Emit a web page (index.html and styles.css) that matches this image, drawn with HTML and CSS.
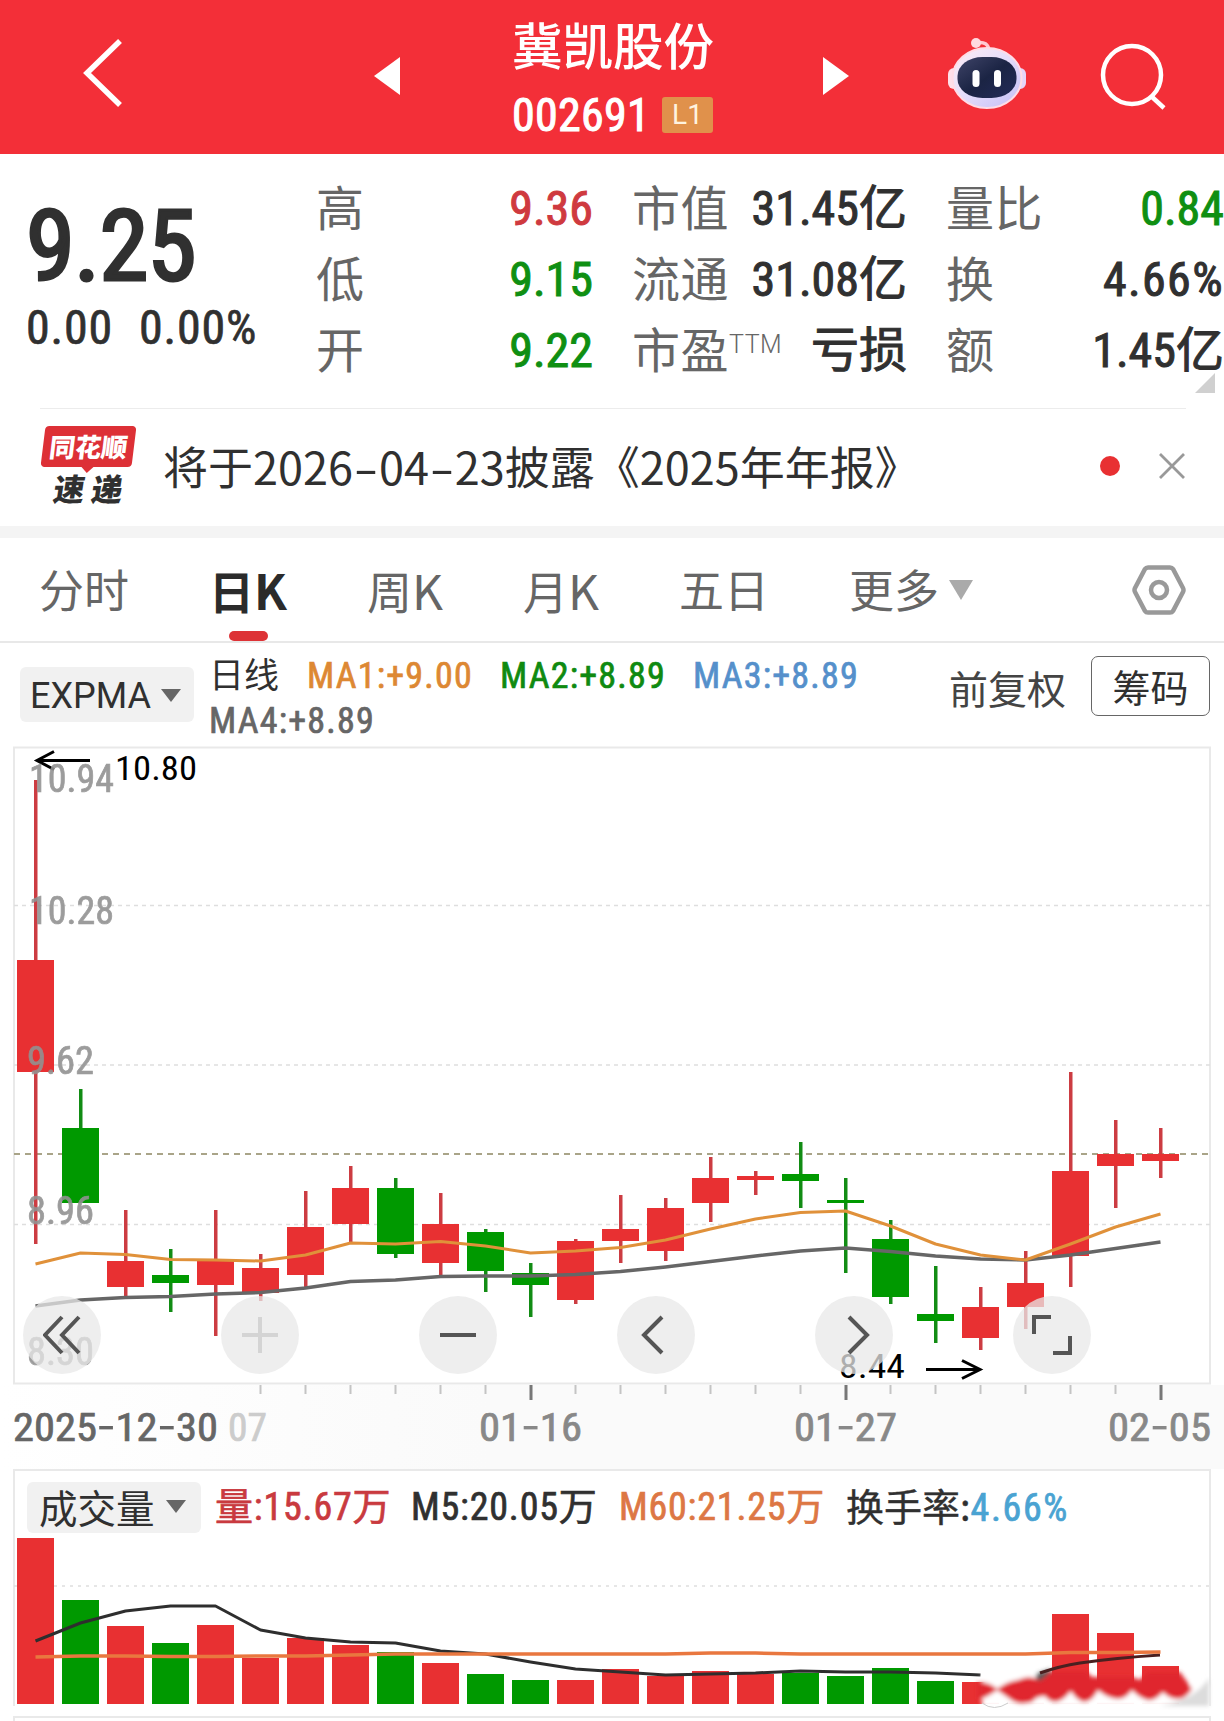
FILE: index.html
```html
<!DOCTYPE html>
<html lang="zh-CN">

<head>
    <meta charset="UTF-8">
    <meta name="viewport" content="width=device-width, initial-scale=1.0">
    <title>冀凯股份 002691</title>
    <link rel="stylesheet" href="styles.css">
</head>

<body>
    <header class="header">
        <svg class="back" width="42" height="70" viewBox="0 0 42 70">
            <path d="M38 3 L5 35 L38 67" fill="none" stroke="#fff" stroke-width="5.5" />
        </svg>
        <svg class="prev" width="26" height="40" viewBox="0 0 26 40">
            <path d="M26 1 V39 L0 20 Z" fill="#fff" />
        </svg>
        <div class="stock">
            <div class="stock-name">冀凯股份</div>
            <div class="stock-code">
                <span class="num">002691</span>
                <span class="level">L1</span>
            </div>
        </div>
        <svg class="next" width="26" height="40" viewBox="0 0 26 40">
            <path d="M0 1 V39 L26 20 Z" fill="#fff" />
        </svg>
        <svg class="robot" width="80" height="74" viewBox="0 0 80 74">
            <defs>
                <linearGradient id="shell" x1="0" y1="0" x2="1" y2="1">
                    <stop offset="0" stop-color="#ffeef4" />
                    <stop offset="0.5" stop-color="#e4dcfb" />
                    <stop offset="1" stop-color="#c3bdf6" />
                </linearGradient>
                <linearGradient id="face" x1="0" y1="0" x2="1" y2="1">
                    <stop offset="0" stop-color="#3f4468" />
                    <stop offset="0.5" stop-color="#1b2444" />
                    <stop offset="1" stop-color="#222a58" />
                </linearGradient>
            </defs>
            <path d="M28 6 Q42 3 42 15" fill="none" stroke="#ffc9d2" stroke-width="3.5" />
            <circle cx="29" cy="6" r="5" fill="#ffd9e0" />
            <rect x="1" y="31" width="12" height="21" rx="6" fill="#ffdfe9" />
            <rect x="67" y="31" width="12" height="21" rx="6" fill="#e6d4f8" />
            <ellipse cx="40" cy="41" rx="34.500" ry="30" fill="url(#shell)" stroke="#ffdce6" stroke-width="2" />
            <rect x="10.500" y="20" width="59" height="41" rx="25" ry="19" fill="url(#face)" />
            <rect x="25.500" y="33" width="7" height="17" rx="3.500" fill="#fff" />
            <rect x="47" y="33" width="7" height="17" rx="3.500" fill="#fff" />
        </svg>
        <svg class="search" width="68" height="68" viewBox="0 0 68 68">
            <circle cx="32" cy="32" r="29" fill="none" stroke="#fff" stroke-width="4.500" />
            <path d="M51 53 L64 65" stroke="#fff" stroke-width="4.500" />
        </svg>
    </header>

    <section class="quote">
        <div class="price">
            <div class="price-now num">9.25</div>
            <div class="price-change num"><span>0.00</span><span>0.00%</span></div>
        </div>
        <div class="stats">
            <div class="stat"><span class="label">高</span><span class="num up">9.36</span></div>
            <div class="stat"><span class="label">市值</span><span class="num">31.45亿</span></div>
            <div class="stat"><span class="label">量比</span><span class="num down">0.84</span></div>
            <div class="stat"><span class="label">低</span><span class="num down">9.15</span></div>
            <div class="stat"><span class="label">流通</span><span class="num">31.08亿</span></div>
            <div class="stat"><span class="label">换</span><span class="num percent">4.66%</span></div>
            <div class="stat"><span class="label">开</span><span class="num down">9.22</span></div>
            <div class="stat"><span class="label">市盈<sup>TTM</sup></span><span class="num">亏损</span></div>
            <div class="stat"><span class="label">额</span><span class="num">1.45亿</span></div>
        </div>
        <span class="corner"></span>
    </section>

    <section class="notice">
        <div class="notice-logo">
            <span class="logo-top">同花顺</span>
            <span class="logo-bottom">速 递</span>
        </div>
        <div class="notice-text">将于2026<i class="dash">-</i>04<i class="dash">-</i>23披露《2025年年报》</div>
        <span class="dot"></span>
        <svg class="close" width="28" height="28" viewBox="0 0 28 28">
            <path d="M2 2 L26 26 M26 2 L2 26" stroke="#999" stroke-width="2.800" />
        </svg>
    </section>

    <nav class="tabs">
        <span class="tab">分时</span>
        <span class="tab active">日<b>K</b></span>
        <span class="tab">周<b>K</b></span>
        <span class="tab">月<b>K</b></span>
        <span class="tab">五日</span>
        <span class="tab">更多</span>
        <span class="caret caret-more"></span>
        <svg class="settings" width="54" height="52" viewBox="0 0 54 52">
            <path d="M16 3.500 H38 Q40 3.500 41 5 L51 24 Q52 26 51 28 L41 47 Q40 48.500 38 48.500 H16 Q14 48.500 13 47 L3 28 Q2 26 3 24 L13 5 Q14 3.500 16 3.500 Z" fill="none" stroke="#999" stroke-width="4.500" />
            <circle cx="27" cy="26" r="8" fill="none" stroke="#999" stroke-width="4.500" />
        </svg>
    </nav>

    <section class="indicator">
        <div class="pill pill-expma">EXPMA<span class="caret"></span></div>
        <div class="ma">
            <span class="ma-title">日线</span>
            <span class="num ma1">MA1:+9.00</span>
            <span class="num ma2">MA2:+8.89</span>
            <span class="num ma3">MA3:+8.89</span>
            <span class="num ma4">MA4:+8.89</span>
        </div>
        <span class="adjust">前复权</span>
        <button class="chips">筹码</button>
    </section>

    <section class="chart">
        <svg id="kline" width="1224" height="640" viewBox="0 745 1224 640"></svg>
        <div class="tools">
            <button class="tool"><svg width="38" height="40" viewBox="0 0 38 40"><path d="M19 2 L2 20 L19 38 M36 2 L19 20 L36 38" /></svg></button>
            <button class="tool disabled"><svg width="38" height="38" viewBox="0 0 38 38"><path d="M1 19 H37 M19 1 V37" /></svg></button>
            <button class="tool"><svg width="38" height="38" viewBox="0 0 38 38"><path d="M1 19 H37" /></svg></button>
            <button class="tool"><svg width="38" height="40" viewBox="0 0 38 40"><path d="M25 2 L7 20 L25 38" /></svg></button>
            <button class="tool"><svg width="38" height="40" viewBox="0 0 38 40"><path d="M14 2 L32 20 L14 38" /></svg></button>
            <button class="tool"><svg width="42" height="42" viewBox="0 0 42 42"><path d="M20 3 H3 V20 M39 22 V39 H22" /></svg></button>
        </div>
    </section>

    <section class="axis">
        <svg id="dates" width="1224" height="84" viewBox="0 1385 1224 84"></svg>
    </section>

    <section class="volume">
        <div class="volume-head">
            <div class="pill pill-volume">成交量<span class="caret"></span></div>
            <span class="num v-now">量:15.67万</span>
            <span class="num v-m5">M5:20.05万</span>
            <span class="num v-m60">M60:21.25万</span>
            <span class="v-rate">换手率:<b class="num">4.66%</b></span>
        </div>
        <svg id="volume" width="1224" height="186" viewBox="0 1535 1224 186"></svg>
    </section>

    <script src="script.js"></script>
</body>

</html>
```
FILE: styles.css
```css
* {
    margin: 0;
    padding: 0;
    box-sizing: border-box;
}

body {
    width: 1224px;
    height: 1721px;
    overflow: hidden;
    background: #fff;
    color: #303030;
    font-family: 'Noto Sans CJK SC', sans-serif;
    font-size: 48px;
    line-height: 1;
}

svg {
    display: block;
    flex: none;
}

button {
    font-family: inherit;
    border: none;
}

span,
div {
    white-space: nowrap;
}

.num {
    font-family: Roboto, 'Noto Sans CJK SC', sans-serif;
    font-stretch: 82%;
    font-weight: 400;
    -webkit-text-stroke: 1px currentColor;
}

/* header */
.header {
    height: 154px;
    background: #f32f38;
    color: #fff;
    display: flex;
    align-items: flex-start;
}

.back {
    margin: 38px 0 0 82px;
}

.prev {
    margin: 56px 0 0 250px;
}

.stock {
    width: 206px;
    margin: 18px 0 0 112px;
}

.stock-name {
    font-size: 50.5px;
    line-height: 50px;
    font-weight: 500;
}

.stock-code {
    display: flex;
    align-items: center;
    justify-content: space-between;
    height: 38px;
    margin-top: 28px;
    padding-right: 5px;
}

.stock-code .num {
    font-size: 46px;
    letter-spacing: 0.3px;
}

.level {
    width: 51px;
    height: 36px;
    border-radius: 3px;
    background: #e0914b;
    color: #fff3df;
    font: 28px/36px Roboto, sans-serif;
    text-align: center;
}

.next {
    margin: 56px 0 0 105px;
}

.robot {
    margin: 37px 0 0 98px;
}

.search {
    margin: 43px 0 0 73px;
}

/* quote */
.quote {
    position: relative;
    display: flex;
    height: 254px;
    padding-top: 19px;
}

.price {
    width: 316px;
    padding-left: 26px;
}

.price-now {
    margin-top: 24px;
    font-size: 99px;
    line-height: 99px;
    letter-spacing: -0.8px;
    -webkit-text-stroke-width: 3px;
}

.price-change {
    display: flex;
    gap: 26px;
    margin-top: 8px;
    line-height: 48px;
    letter-spacing: 0.8px;
    -webkit-text-stroke-width: 0.7px;
}

.stats {
    display: grid;
    grid-template-columns: 277px 275px 278px;
    grid-auto-rows: 71px;
    column-gap: 39px;
}

.stat {
    display: flex;
    justify-content: space-between;
    align-items: center;
    height: 71px;
    line-height: 71px;
}

.label {
    margin-top: -6px;
    color: #666;
    letter-spacing: 0.5px;
}

.label sup {
    font: 300 25px/26px Roboto, sans-serif;
    vertical-align: 15px;
}

.percent {
    letter-spacing: 1.4px;
}

.up {
    color: #cf3a3f;
}

.down {
    color: #0f8f12;
}

.corner {
    position: absolute;
    right: 9px;
    bottom: 15px;
    border-left: 20px solid transparent;
    border-bottom: 20px solid #d0d0d0;
}

/* notice */
.notice {
    display: flex;
    align-items: center;
    height: 118px;
    margin: 0 38px 0 40px;
    padding-bottom: 3px;
    border-top: 1px solid #ececec;
}

.notice-logo {
    width: 97px;
    height: 80px;
    font-weight: 900;
    text-align: center;
}

.logo-top {
    position: relative;
    display: block;
    height: 41px;
    margin: 0 3px;
    border-radius: 4px;
    background: #dd3036;
    color: #fff;
    font-size: 26px;
    line-height: 40px;
    transform: skewX(-7deg);
}

.logo-top::after {
    content: '';
    position: absolute;
    left: 40px;
    top: 40px;
    border: 7px solid transparent;
    border-top-color: #dd3036;
    border-bottom: 0;
}

.logo-bottom {
    display: block;
    margin-top: 5px;
    font-size: 31px;
    line-height: 32px;
    transform: skewX(-9deg);
}

.notice-text {
    width: 750px;
    margin-left: 26px;
    font-size: 45px;
    line-height: 60px;
}

.dash {
    display: inline-block;
    width: 26px;
    text-align: center;
    font-style: normal;
    transform: scaleX(1.6);
}

.dot {
    width: 20px;
    height: 20px;
    margin-left: auto;
    border-radius: 50%;
    background: #e83032;
}

.close {
    margin-left: 38px;
}

/* tabs */
.tabs {
    display: flex;
    align-items: center;
    height: 117px;
    border-top: 12px solid #f4f4f4;
    border-bottom: 2px solid #e8e8e8;
    padding-left: 39px;
    font-size: 45px;
    color: #666;
}

.tab {
    position: relative;
    height: 103px;
    line-height: 102px;
    margin-right: 80px;
}

.tab b {
    font-size: 48px;
    font-weight: inherit;
}

.tab.active {
    color: #2b2b2b;
    font-weight: 700;
}

.tab.active::after {
    content: '';
    position: absolute;
    left: 50%;
    bottom: 0;
    width: 39px;
    height: 10px;
    margin-left: -19px;
    border-radius: 5px;
    background: #dd3236;
}

.caret {
    display: inline-block;
    border: 10px solid transparent;
    border-top: 13px solid #666;
    border-bottom: 0;
}

.caret-more {
    margin-left: -70px;
    border-width: 20px 12px 0;
    border-top-color: #aaa;
}

.settings {
    margin-left: auto;
    margin-right: 38px;
}

/* indicator */
.indicator {
    display: flex;
    height: 102px;
}

.pill {
    display: flex;
    align-items: center;
    justify-content: space-between;
    border-radius: 6px;
    background: #f1f1f1;
}

.pill-expma {
    width: 174px;
    height: 55px;
    margin: 24px 0 0 20px;
    padding: 2px 13px 0 10px;
    font-family: Roboto, sans-serif;
    font-size: 36px;
}

.ma {
    display: grid;
    grid-template-columns: 98px 193px 193px 170px;
    grid-template-rows: 45px 46px;
    width: 740px;
    margin: 11px 0 0 15px;
    font-size: 36px;
    line-height: 44px;
}

.ma-title {
    margin-top: -3px;
    font-size: 35px;
}

.ma .num {
    letter-spacing: 1.2px;
    -webkit-text-stroke-width: 0.7px;
}

.ma1 {
    color: #dd8833;
}

.ma2 {
    color: #0f8a10;
}

.ma3 {
    color: #5590cb;
}

.ma .ma4 {
    grid-column: 1 / 3;
    color: #666;
}

.adjust {
    margin-top: 25px;
    font-size: 39px;
    line-height: 39px;
    color: #444;
}

.chips {
    width: 119px;
    height: 60px;
    margin: 13px 14px 0 auto;
    border: 1.5px solid #666;
    border-radius: 7px;
    background: #fff;
    color: #303030;
    font-size: 38px;
    line-height: 54px;
}

/* k-line chart */
.chart {
    position: relative;
    height: 640px;
}

.tools {
    position: absolute;
    left: 23px;
    top: 551px;
    display: flex;
    gap: 120px;
}

.tool {
    display: flex;
    align-items: center;
    justify-content: center;
    width: 78px;
    height: 78px;
    border-radius: 50%;
    background: rgba(232, 232, 232, 0.75);
}

.tool path {
    fill: none;
    stroke: #555;
    stroke-width: 4;
}

.tool.disabled path {
    stroke: #d4d4d4;
}

.axis {
    height: 84px;
    background: linear-gradient(90deg, #fff, #fafafa 40%);
}

svg text {
    font-family: Roboto, sans-serif;
    font-stretch: 82%;
    font-size: 38px;
    stroke: currentColor;
    stroke-width: 0.7px;
}

svg .extremes text {
    stroke: none;
}

svg .hyphen {
    font-family: 'Noto Sans CJK SC', sans-serif;
    font-size: 48px;
    stroke: none;
}

/* volume */
.volume-head {
    display: flex;
    align-items: center;
    height: 66px;
    margin: 0 13px;
    border: 2px solid #e9e9e9;
    border-bottom: 0;
    font-size: 38px;
}

.pill-volume {
    width: 174px;
    height: 51px;
    margin-left: 12px;
    padding: 0 15px 3px 12px;
    margin-top: 9px;
    font-size: 38.5px;
}

.volume-head > span {
    margin-top: 8px;
    line-height: 50px;
}

.volume-head .num {
    letter-spacing: 0.8px;
    -webkit-text-stroke-width: 0.7px;
}

.volume-head .v-now {
    margin-left: 14px;
    width: 196px;
    color: #c93a3f;
}

.v-m5 {
    width: 208px;
}

.v-m60 {
    width: 227px;
    color: #dd7744;
}

.volume-head .v-rate {
    margin-top: 6px;
    -webkit-text-stroke: 0.4px currentColor;
}

.volume-head .v-rate b {
    color: #4aa3d2;
    letter-spacing: 1.6px;
}
```
FILE: script.js
```js
const RED = '#e83032';
const GREEN = '#009900';
const STEP = 45;
const X0 = 35.5;
const BAR = 37;

const cx = i => X0 + STEP * i;

// [rising, high, low, body top, body bottom, volume top]
const days = [
    [1, 780, 1244, 960, 1072, 1538],
    [0, 1089, 1203, 1128, 1203, 1600],
    [1, 1210, 1296, 1261, 1287, 1626],
    [0, 1249, 1312, 1275, 1283, 1643],
    [1, 1210, 1336, 1261, 1285, 1625],
    [1, 1254, 1301, 1268, 1293, 1658],
    [1, 1191, 1288, 1227, 1275, 1638],
    [1, 1166, 1242, 1188, 1224, 1645],
    [0, 1178, 1258, 1188, 1254, 1652],
    [1, 1193, 1276, 1224, 1263, 1663],
    [0, 1229, 1292, 1232, 1271, 1674],
    [0, 1263, 1317, 1273, 1285, 1680],
    [1, 1239, 1304, 1241, 1300, 1680],
    [1, 1195, 1263, 1229, 1241, 1669],
    [1, 1198, 1261, 1208, 1251, 1676],
    [1, 1157, 1222, 1178, 1203, 1671],
    [1, 1171, 1195, 1176, 1180, 1674],
    [0, 1142, 1208, 1174, 1181, 1673],
    [0, 1178, 1273, 1200, 1203, 1676],
    [0, 1220, 1304, 1239, 1297, 1668],
    [0, 1266, 1343, 1314, 1321, 1681],
    [1, 1287, 1350, 1307, 1338, 1682],
    [1, 1251, 1329, 1283, 1307, 1684],
    [1, 1072, 1287, 1171, 1256, 1614],
    [1, 1120, 1208, 1154, 1166, 1633],
    [1, 1128, 1178, 1154, 1161, 1666]
];

const ma1 = [1264, 1253, 1254.5, 1259.5, 1260, 1261, 1255, 1243, 1244, 1241.5, 1246, 1253, 1251, 1247.5, 1240, 1229, 1219, 1212.5, 1211, 1226, 1244, 1255, 1260, 1244, 1227, 1214];
const ma4 = [1306, 1300, 1297.5, 1296.5, 1294, 1292.5, 1288, 1281.5, 1280, 1276.5, 1276, 1276, 1274.5, 1271.5, 1267, 1261.5, 1256, 1251, 1248, 1251.5, 1256, 1259, 1260, 1255, 1248.5, 1242];
const m5 = [1641, 1623, 1611, 1606, 1606, 1630, 1638, 1642, 1643, 1651, 1654, 1662, 1669, 1672, 1675, 1674, 1673, 1671, 1672, 1672, 1673, 1675];
const m60 = [1657, 1656, 1656, 1656.5, 1656.5, 1656, 1656, 1655, 1654, 1654, 1654, 1654, 1654, 1654, 1654, 1653, 1653, 1654, 1654, 1654, 1654, 1654, 1654, 1652.5, 1652.5, 1652];

const line = (ys, color, width) =>
    `<polyline points="${ys.map((y, i) => cx(i) + ',' + y).join(' ')}" fill="none" stroke="${color}" stroke-width="${width}" stroke-linejoin="round"/>`;

const rule = (y, color, dash, width) =>
    `<path d="M14 ${y} H1210" stroke="${color}" stroke-width="${width}" stroke-dasharray="${dash}"/>`;

const label = (x, y, w, color, text, size) =>
    `<text x="${x}" y="${y}" textLength="${w}" lengthAdjust="spacingAndGlyphs" fill="${color}" style="color:${color};font-size:${size || 38}px">${text.replace(/-/g, '<tspan class="hyphen">-</tspan>')}</text>`;

function drawKline() {
    let s = '<rect x="14" y="747.500" width="1196" height="636" fill="none" stroke="#e9e9e9" stroke-width="2"/>';
    s += rule(905.5, '#dedede', '4 4', 1.5) + rule(1065, '#dedede', '4 4', 1.5) + rule(1224.5, '#dedede', '4 4', 1.5);
    s += rule(1154, '#a9a488', '6 5', 2);
    days.forEach(([up, high, low, top, bottom], i) => {
        const color = up ? RED : GREEN;
        s += `<rect x="${cx(i) - 1.5}" y="${high}" width="3.500" height="${low - high}" fill="${up ? '#cc3c42' : '#128c14'}"/>`;
        s += `<rect x="${cx(i) - BAR / 2}" y="${top}" width="${BAR}" height="${bottom - top}" fill="${color}"/>`;
    });
    s += line(ma4, '#666', 3.5) + line(ma1, '#e0913a', 3);
    s += '<path d="M90 760.500 H37 M54 751.500 L37 760.500 L54 769.500" fill="none" stroke="#000" stroke-width="3"/>';
    s += '<path d="M926 1369.500 H979 M962 1360.500 L980 1369.500 L962 1378.500" fill="none" stroke="#000" stroke-width="3"/>';
    s += '<g opacity="0.9">';
    s += label(29, 792, 85, '#929292', '10.94') + label(29, 924, 85, '#929292', '10.28');
    s += label(27, 1074, 67, '#929292', '9.62') + label(27, 1224, 67, '#929292', '8.96') + label(27, 1365, 67, '#929292', '8.30');
    s += '</g>';
    s += '<g class="extremes">' + label(115, 780, 82, '#000', '10.80', 34) + label(839, 1378, 66, '#000', '8.44', 34) + '</g>';
    document.getElementById('kline').innerHTML = s;
}

function drawDates() {
    let s = '';
    for (let i = 5; i < days.length; i++) {
        const major = [11, 18, 25].includes(i);
        s += `<rect x="${cx(i) - 1}" y="1385" width="${major ? 3 : 2}" height="${major ? 15 : 9}" fill="${major ? '#777' : '#c4c4c4'}"/>`;
    }
    s += label(13, 1441, 205, '#666', '2025-12-30') + label(228, 1441, 39, '#ccc', '07');
    s += label(479, 1441, 103, '#888', '01-16') + label(794, 1441, 103, '#888', '01-27') + label(1108, 1441, 103, '#888', '02-05');
    document.getElementById('dates').innerHTML = s;
}

function drawVolume() {
    let s = '<defs><filter id="soft" x="-10%" y="-30%" width="120%" height="160%"><feGaussianBlur stdDeviation="2"/></filter></defs>';
    s += '<path d="M14 1535 V1706 M1210 1535 V1706" stroke="#e9e9e9" stroke-width="2"/>';
    s += '<rect x="14" y="1717" width="1196" height="8" fill="none" stroke="#e9e9e9" stroke-width="2"/>';
    s += rule(1586, '#dedede', '3 5', 1.5);
    days.forEach((d, i) => {
        s += `<rect x="${cx(i) - BAR / 2}" y="${d[5]}" width="${BAR}" height="${1704 - d[5]}" fill="${d[0] ? RED : GREEN}"/>`;
    });
    s += line(m5, '#2e2e2e', 3);
    // smudge over the last bars
    s += '<g filter="url(#soft)">';
    s += '<path d="M982 1674 H1038 V1685 H1210 V1707 H982 Z" fill="#fff"/>';
    s += '<path d="M1160 1706 Q1195 1700 1209 1678 V1706 Z" fill="#dcdcdc"/>';
    s += '<path d="M1036 1674 L1050 1669 V1684 H1036 Z" fill="#555"/>';
    s += '<path d="M978 1682 Q990 1682 997 1689 Q1008 1681 1018 1680 Q1030 1674 1040 1681 L1052 1671 H1086 L1092 1677 H1132 L1140 1680 L1148 1672 H1180 L1192 1689 Q1186 1699 1177 1699 Q1168 1698 1163 1692 Q1154 1702 1147 1700 Q1138 1697 1132 1690 Q1126 1699 1117 1699 Q1105 1697 1098 1690 Q1092 1702 1084 1702 Q1076 1700 1071 1691 Q1062 1702 1055 1702 Q1048 1701 1045 1696 Q1036 1696 1032 1702 Q1018 1706 1010 1699 L997 1690 Q988 1697 978 1700 Z" fill="#e0282f"/>';
    s += '</g>';
    s += '<path d="M982 1703 Q994 1712 1008 1703" fill="none" stroke="#ccc" stroke-width="1"/>';
    s += '<path d="M1040 1673 Q1060 1666 1080 1663 Q1115 1658 1160 1655" fill="none" stroke="#4a2020" stroke-width="3"/>';
    s += line(m60, '#e9773f', 3.5);
    document.getElementById('volume').innerHTML = s;
}

drawKline();
drawDates();
drawVolume();
```
